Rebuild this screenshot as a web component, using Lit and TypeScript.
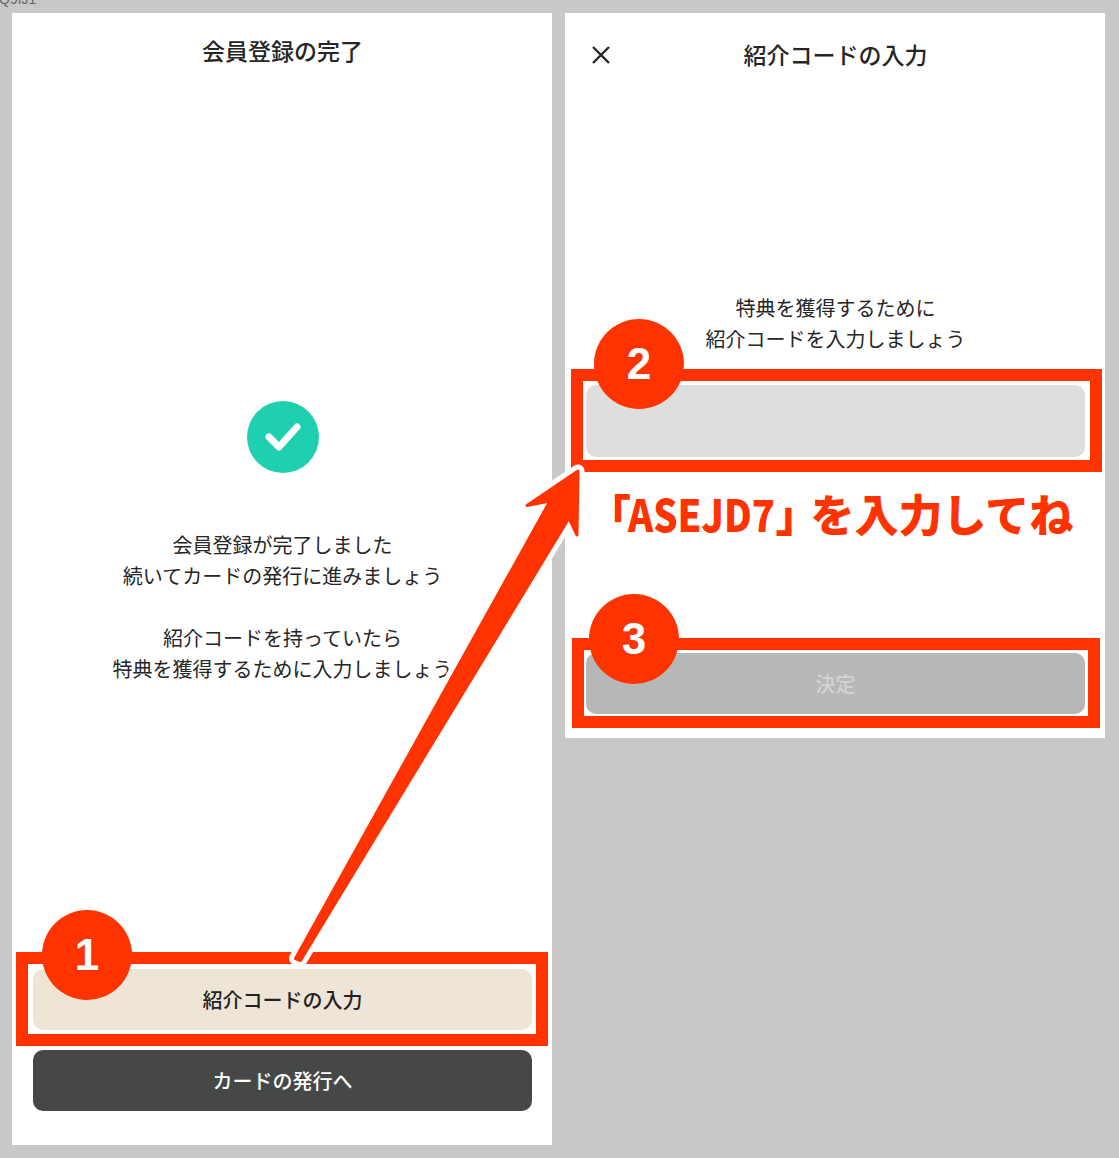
import { LitElement, html, css, svg } from "lit";
import { customElement } from "lit/decorators.js";

const ARROW = "295.5,958.5 550,501 527,505.5 578,471 577,535 569,518 300.5,960.5";

@customElement("app-root")
export class AppRoot extends LitElement {
  static styles = css`
    :host {
      display: block;
      position: relative;
      width: 1119px;
      height: 1158px;
      overflow: hidden;
      background: #c8c8c8;
      font-family: "Noto Sans CJK JP", "Noto Sans", sans-serif;
      color: #262626;
    }
    .stamp {
      position: absolute;
      left: -1px;
      top: -9px;
      font: 14px "Liberation Sans", sans-serif;
      color: #666;
    }
    .page {
      display: flex;
      align-items: flex-start;
      gap: 13px;
      padding: 13px 0 0 12px;
    }
    .panel {
      position: relative;
      box-sizing: border-box;
      width: 540px;
      background: #fff;
      display: flex;
      flex-direction: column;
      align-items: center;
    }
    .left { height: 1132px; padding: 0 20px 34px 21px; }
    .right { height: 725px; padding: 0 20px 24px 21px; }
    h1 { margin: 0; font-size: 23px; font-weight: 500; line-height: 34px; }
    .left h1 { margin-top: 20px; }
    .bar {
      align-self: stretch;
      margin: 24px 0 0;
      display: flex;
      justify-content: center;
      position: relative;
    }
    .close { position: absolute; left: 4px; top: 7px; width: 22px; height: 22px; }
    .check { width: 72px; height: 72px; margin-top: 334px; }
    p { margin: 0; font-size: 20px; line-height: 31px; text-align: center; white-space: nowrap; }
    .msg { margin-top: 56px; }
    .msg + .msg { margin-top: 31px; }
    .grow { flex: 1; }
    .btn {
      position: relative;
      align-self: stretch;
      height: 61px;
      border-radius: 10px;
      display: flex;
      align-items: center;
      justify-content: center;
      font-size: 20px;
      font-weight: 500;
    }
    .beige { background: #efe5d6; color: #222; }
    .dark { background: #454847; color: #fff; margin-top: 20px; }
    .field { background: #dedede; height: 72px; margin-top: 31px; }
    .off { background: #b6b8b7; color: #d2d4d3; margin-top: 196px; }
    .intro { margin-top: 221px; }
    .hl { position: absolute; border: 12px solid #ff3300; box-sizing: border-box; pointer-events: none; }
    .hl1 { inset: -17px -16px -16px -17px; }
    .hl2 { inset: -16px -17px -15px -15px; }
    .hl3 { inset: -15px -15px -14px -14px; }
    .badge {
      position: absolute;
      width: 90px;
      height: 90px;
      border-radius: 50%;
      background: #ff3300;
      color: #fff;
      font: 700 44px "Liberation Sans", sans-serif;
      display: flex;
      align-items: center;
      justify-content: center;
    }
    .b1 { left: 9px; top: -59px; }
    .b2 { left: 8px; top: -66px; }
    .b3 { left: 3px; top: -59px; }
    .note {
      position: absolute;
      left: 22px;
      top: 470px;
      color: #ff3300;
      font-size: 44px;
      font-weight: 900;
      line-height: 60px;
      white-space: nowrap;
    }
    .latin {
      display: inline-block;
      transform: scaleX(0.867);
      transform-origin: left center;
      margin: 0 -22px 0 -3px;
    }
    .close-q { margin-right: -9px; }
    .arrow { position: absolute; left: 0; top: 0; width: 1119px; height: 1158px; pointer-events: none; }
  `;

  render() {
    return html`
      <div class="stamp">Q9fJ1</div>
      <div class="page">
        <section class="panel left">
          <h1>会員登録の完了</h1>
          <svg class="check" viewBox="0 0 72 72">
            <circle cx="36" cy="36" r="36" fill="#1fd0b0"></circle>
            <path d="M22 36l10 10 18-20" fill="none" stroke="#fff" stroke-width="7" stroke-linecap="round" stroke-linejoin="round"></path>
          </svg>
          <p class="msg">会員登録が完了しました<br />続いてカードの発行に進みましょう</p>
          <p class="msg">紹介コードを持っていたら<br />特典を獲得するために入力しましょう</p>
          <div class="grow"></div>
          <div class="btn beige">紹介コードの入力
            <div class="hl hl1"></div>
            <div class="badge b1">1</div>
          </div>
          <div class="btn dark">カードの発行へ</div>
        </section>
        <section class="panel right">
          <div class="bar">
            <svg class="close" viewBox="0 0 22 22">
              <path d="M3 3l16 16M19 3L3 19" stroke="#262626" stroke-width="2.4" fill="none"></path>
            </svg>
            <h1>紹介コードの入力</h1>
          </div>
          <p class="intro">特典を獲得するために<br />紹介コードを入力しましょう</p>
          <div class="btn field">
            <div class="hl hl2"></div>
            <div class="badge b2">2</div>
          </div>
          <div class="note">「<span class="latin">ASEJD7</span><span class="close-q">」</span>を入力してね</div>
          <div class="btn off">決定
            <div class="hl hl3"></div>
            <div class="badge b3">3</div>
          </div>
        </section>
      </div>
      <svg class="arrow" viewBox="0 0 1119 1158">
        ${svg`<polygon points=${ARROW} fill="#fff" stroke="#fff" stroke-width="13" stroke-linejoin="round"></polygon>
        <polygon points=${ARROW} fill="#ff3300" stroke="#ff3300" stroke-width="3" stroke-linejoin="round"></polygon>`}
      </svg>
    `;
  }
}
